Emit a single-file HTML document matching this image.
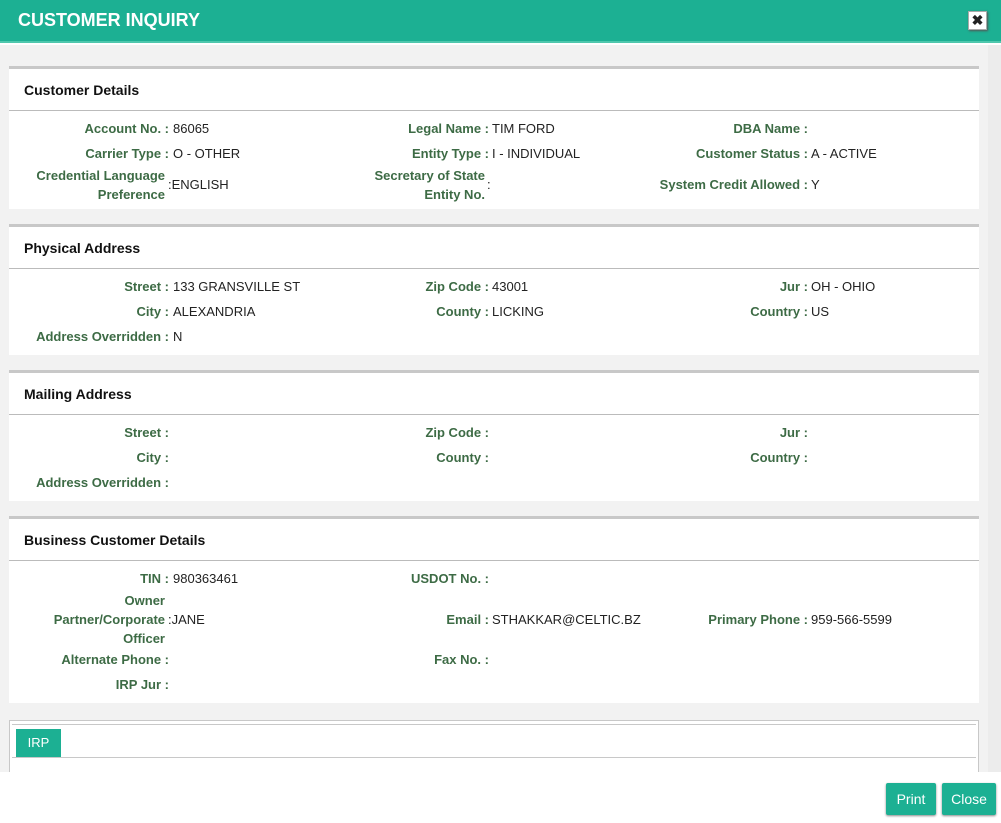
<!DOCTYPE html>
<html><head><meta charset="utf-8"><style>
*{margin:0;padding:0;box-sizing:border-box}
body{width:1001px;height:823px;position:relative;background:#fff;font-family:"Liberation Sans",sans-serif;font-size:13px;overflow:hidden}
.hdr{position:absolute;left:0;top:0;width:1001px;height:43px;background:#1cb093;border-bottom:2px solid #4fc7ad}
.hdr h1{position:absolute;left:18px;top:10px;color:#fff;font-size:18px;font-weight:bold}
.x{position:absolute;left:968px;top:11px;width:19px;height:19px;background:#fff;border:1px solid #aaa;box-shadow:1px 1px 2px #555;font-weight:bold;font-size:14px;line-height:17px;text-align:center;color:#222}
.body{position:absolute;left:0;top:45px;width:1001px;height:727px;background:#f2f2f2}
.sb{position:absolute;left:988px;top:45px;width:13px;height:727px;background:#ececec}
.p{position:absolute;left:9px;width:970px;background:#fff;border-top:3px solid #c8c8c8}
.p h2{position:absolute;left:15px;top:13px;font-size:14px;font-weight:bold;color:#111}
.p .ln{position:absolute;left:0;right:0;top:41px;border-top:1px solid #bbb}
.l{position:absolute;width:220px;text-align:right;color:#3d6b45;font-weight:bold;line-height:19px}
.v{position:absolute;color:#222;line-height:19px}
.btn{position:absolute;top:783px;height:32px;background:#1cb093;color:#fff;font-size:14px;line-height:32px;text-align:center;border-radius:2px;box-shadow:0 1px 2px #888}
</style></head><body>
<div class="hdr"><h1>CUSTOMER INQUIRY</h1><div class="x">✖</div></div>
<div class="body"></div>
<div class="sb"></div>

<div class="p" style="top:66px;height:143px"><h2>Customer Details</h2><div class="ln"></div></div>
<div class="p" style="top:224px;height:131px"><h2>Physical Address</h2><div class="ln"></div></div>
<div class="p" style="top:370px;height:131px"><h2>Mailing Address</h2><div class="ln"></div></div>
<div class="p" style="top:516px;height:187px"><h2>Business Customer Details</h2><div class="ln"></div></div>

<div style="position:absolute;left:9px;top:720px;width:970px;height:52px;background:#fff;border:1px solid #c8c8c8;border-bottom:none"></div>
<div style="position:absolute;left:12px;top:724px;width:964px;border-top:1px solid #c8c8c8"></div>
<div style="position:absolute;left:12px;top:757px;width:964px;border-top:1px solid #c8c8c8"></div>
<div style="position:absolute;left:16px;top:729px;width:45px;height:28px;background:#1cb093;color:#fff;line-height:28px;text-align:center;font-size:13px">IRP</div>
<div style="position:absolute;left:0;top:772px;width:1001px;height:51px;background:#fff"></div>

<div id="f"></div>
<div class="btn" style="left:886px;width:50px">Print</div>
<div class="btn" style="left:942px;width:54px">Close</div>

<!-- fields -->
<div class="l" style="left:-51px;top:119px">Account No. :</div><div class="v" style="left:173px;top:119px">86065</div>
<div class="l" style="left:269px;top:119px">Legal Name :</div><div class="v" style="left:492px;top:119px">TIM FORD</div>
<div class="l" style="left:588px;top:119px">DBA Name :</div>

<div class="l" style="left:-51px;top:144px">Carrier Type :</div><div class="v" style="left:173px;top:144px">O - OTHER</div>
<div class="l" style="left:269px;top:144px">Entity Type :</div><div class="v" style="left:492px;top:144px">I - INDIVIDUAL</div>
<div class="l" style="left:588px;top:144px">Customer Status :</div><div class="v" style="left:811px;top:144px">A - ACTIVE</div>

<div class="l" style="left:-55px;top:166px">Credential Language<br>Preference</div><div class="v" style="left:168px;top:175px">:ENGLISH</div>
<div class="l" style="left:265px;top:166px">Secretary of State<br>Entity No.</div><div class="v" style="left:487px;top:175px">:</div>
<div class="l" style="left:588px;top:175px">System Credit Allowed :</div><div class="v" style="left:811px;top:175px">Y</div>

<div class="l" style="left:-51px;top:277px">Street :</div><div class="v" style="left:173px;top:277px">133 GRANSVILLE ST</div>
<div class="l" style="left:269px;top:277px">Zip Code :</div><div class="v" style="left:492px;top:277px">43001</div>
<div class="l" style="left:588px;top:277px">Jur :</div><div class="v" style="left:811px;top:277px">OH - OHIO</div>
<div class="l" style="left:-51px;top:302px">City :</div><div class="v" style="left:173px;top:302px">ALEXANDRIA</div>
<div class="l" style="left:269px;top:302px">County :</div><div class="v" style="left:492px;top:302px">LICKING</div>
<div class="l" style="left:588px;top:302px">Country :</div><div class="v" style="left:811px;top:302px">US</div>
<div class="l" style="left:-51px;top:327px">Address Overridden :</div><div class="v" style="left:173px;top:327px">N</div>

<div class="l" style="left:-51px;top:423px">Street :</div>
<div class="l" style="left:269px;top:423px">Zip Code :</div>
<div class="l" style="left:588px;top:423px">Jur :</div>
<div class="l" style="left:-51px;top:448px">City :</div>
<div class="l" style="left:269px;top:448px">County :</div>
<div class="l" style="left:588px;top:448px">Country :</div>
<div class="l" style="left:-51px;top:473px">Address Overridden :</div>

<div class="l" style="left:-51px;top:569px">TIN :</div><div class="v" style="left:173px;top:569px">980363461</div>
<div class="l" style="left:269px;top:569px">USDOT No. :</div>
<div class="l" style="left:-55px;top:591px">Owner<br>Partner/Corporate<br>Officer</div><div class="v" style="left:168px;top:610px">:JANE</div>
<div class="l" style="left:269px;top:610px">Email :</div><div class="v" style="left:492px;top:610px">STHAKKAR@CELTIC.BZ</div>
<div class="l" style="left:588px;top:610px">Primary Phone :</div><div class="v" style="left:811px;top:610px">959-566-5599</div>
<div class="l" style="left:-51px;top:650px">Alternate Phone :</div>
<div class="l" style="left:269px;top:650px">Fax No. :</div>
<div class="l" style="left:-51px;top:675px">IRP Jur :</div>
</body></html>
